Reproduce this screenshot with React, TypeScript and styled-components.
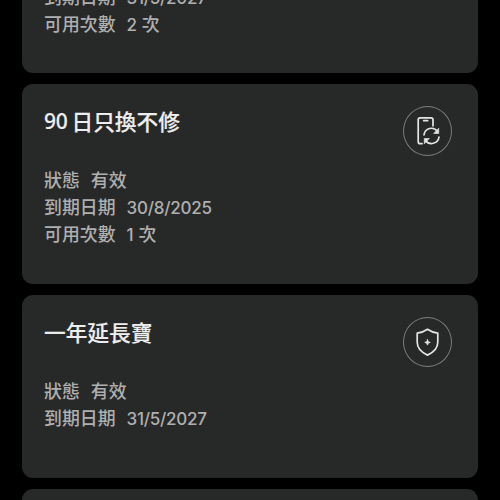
import React from 'react';
import styled, { createGlobalStyle } from 'styled-components';

const GlobalStyle = createGlobalStyle`
  * { box-sizing: border-box; }
  html, body { margin: 0; background: #000; overflow: hidden; }
`;

const Viewport = styled.main`
  height: 500px;
  width: 500px;
  overflow: hidden;
  background: #000;
  font-family: 'Noto Sans CJK TC', sans-serif;
`;

const CardList = styled.div`
  display: flex;
  flex-direction: column;
  gap: 11px;
  margin-top: -39px;
  padding: 0 22px;
`;

const Card = styled.section<{ $height: number }>`
  display: flex;
  flex: none;
  justify-content: space-between;
  align-items: flex-start;
  height: ${(p) => p.$height}px;
  padding: 22px 26px 0 22px;
  border-radius: 11px;
  background: #272929;
`;

const Title = styled.h2`
  display: flex;
  align-items: center;
  gap: 4px;
  height: 29px;
  margin: 0 0 31px;
  color: #ededed;
  font-size: 21.7px;
  font-weight: 500;
  line-height: 29px;
  white-space: nowrap;
  -webkit-text-stroke: 0.15px #ededed;
`;

const TitleNumber = styled.span`
  padding-top: 2px;
  font-family: 'Noto Sans', sans-serif;
  font-size: 21px;
  letter-spacing: -0.3px;
`;

const Row = styled.div`
  display: flex;
  align-items: center;
  height: 27px;
  color: #afafaf;
  font-size: 17.9px;
  font-weight: 500;
  line-height: 27px;
  white-space: nowrap;
`;

const Value = styled.span`
  display: flex;
  align-items: center;
  gap: 5px;
  margin-left: 11px;
`;

const Digits = styled.span`
  padding-top: 2px;
  margin-bottom: -2px;
  line-height: 25px;
  font-family: Inter, sans-serif;
  font-size: 17px;
  letter-spacing: -0.25px;
`;

const IconRing = styled.div`
  display: flex;
  align-items: center;
  justify-content: center;
  width: 49px;
  height: 50px;
  border: 1.5px solid #7b7d7d;
  border-radius: 50%;
`;

const Glyph = styled.svg`
  display: block;
  flex: none;
  fill: none;
  stroke: #e4e4e4;
  stroke-width: 1.7;
  stroke-linecap: round;
  stroke-linejoin: round;
`;

const PhoneSwapIcon = () => (
  <Glyph width="30" height="32" viewBox="0.5 0 30 32">
    <path d="M9.6 28.7H7.7a2 2 0 0 1-2-2V4.8a2 2 0 0 1 2-2h10.8a2 2 0 0 1 2 2v6" />
    <path d="M11.2 5.7h4" />
    <path d="M11.5 19.8a7.5 7.5 0 0 1 13.5-3.4M26.5 22a7.5 7.5 0 0 1-13.5 3.4" />
    <path d="M26.2 13.6v4.9l-4.7-.1zM11.8 28.4v-4.9l4.7.1z" fill="#e4e4e4" strokeWidth="0.7" />
  </Glyph>
);

const ShieldIcon = () => (
  <Glyph width="26" height="30" viewBox="0.5 0 26 30">
    <path d="M13 2.3c3.1 2.2 6.5 3.4 10.3 3.8v9c0 6-4.1 10.3-10.3 13-6.2-2.7-10.3-7-10.3-13v-9c3.8-.4 7.2-1.6 10.3-3.8z" />
    <path d="M13 12.7l.7 2 2 .7-2 .7-.7 2-.7-2-2-.7 2-.7z" fill="#e4e4e4" strokeWidth="0.9" />
  </Glyph>
);

type Field = { label: string; digits?: string; text?: string };
type Plan = { id: string; number?: string; title?: string; fields: Field[]; icon?: 'swap' | 'shield'; height: number };

const plans: Plan[] = [
  {
    id: 'previous',
    height: 112,
    fields: [
      { label: '到期日期', digits: '31/5/2027' },
      { label: '可用次數', digits: '2', text: '次' },
    ],
  },
  {
    id: 'replacement',
    number: '90',
    title: '日只換不修',
    icon: 'swap',
    height: 200,
    fields: [
      { label: '狀態', text: '有效' },
      { label: '到期日期', digits: '30/8/2025' },
      { label: '可用次數', digits: '1', text: '次' },
    ],
  },
  {
    id: 'extended',
    title: '一年延長寶',
    icon: 'shield',
    height: 183,
    fields: [
      { label: '狀態', text: '有效' },
      { label: '到期日期', digits: '31/5/2027' },
    ],
  },
  { id: 'next', height: 200, fields: [] },
];

export default function App() {
  return (
    <>
      <GlobalStyle />
      <Viewport>
        <CardList>
          {plans.map((plan) => (
            <Card key={plan.id} $height={plan.height}>
              <div>
                {plan.title && (
                  <Title>
                    {plan.number && <TitleNumber>{plan.number}</TitleNumber>}
                    <span>{plan.title}</span>
                  </Title>
                )}
                {plan.fields.map((field) => (
                  <Row key={field.label}>
                    <span>{field.label}</span>
                    <Value>
                      {field.digits && <Digits>{field.digits}</Digits>}
                      {field.text && <span>{field.text}</span>}
                    </Value>
                  </Row>
                ))}
              </div>
              {plan.icon && (
                <IconRing>{plan.icon === 'swap' ? <PhoneSwapIcon /> : <ShieldIcon />}</IconRing>
              )}
            </Card>
          ))}
        </CardList>
      </Viewport>
    </>
  );
}
